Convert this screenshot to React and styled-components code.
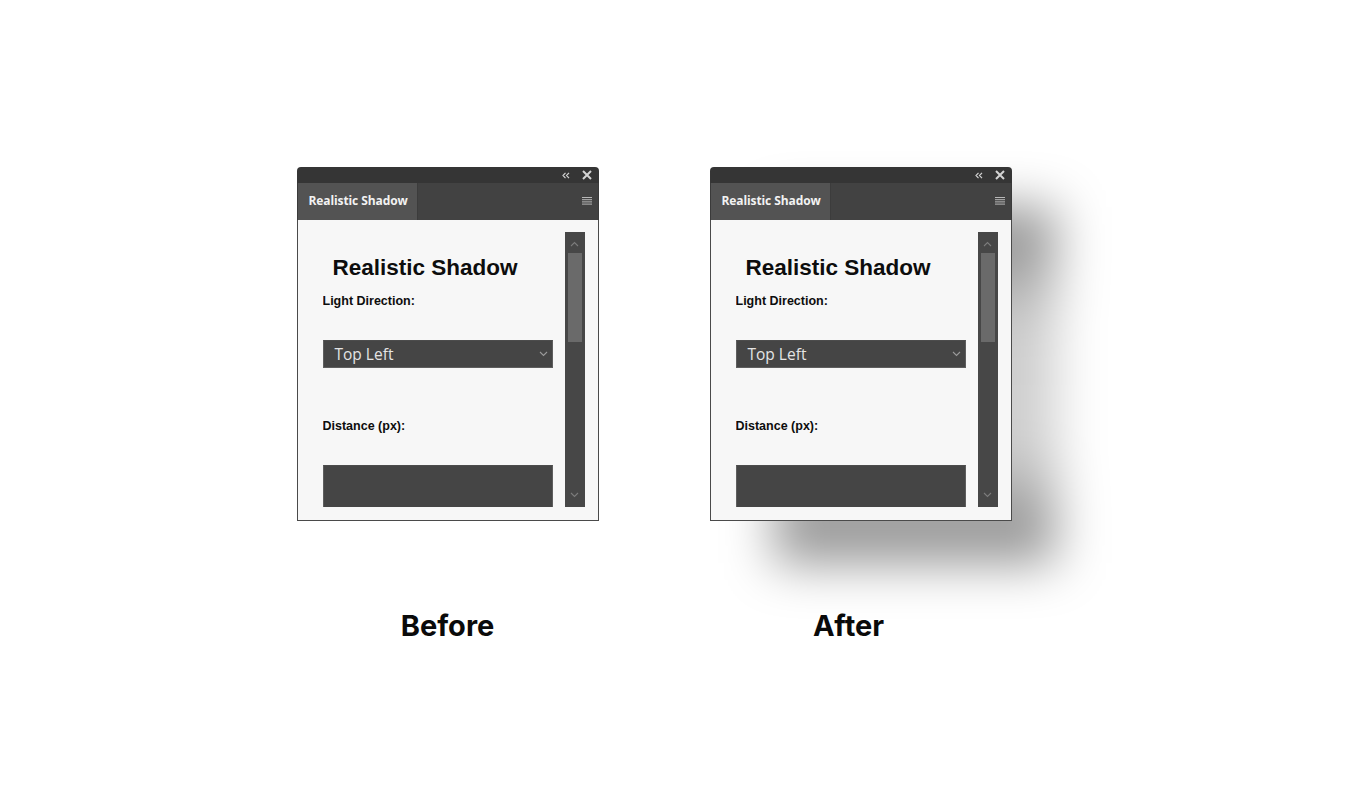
import React from "react";
import styled, { createGlobalStyle, css } from "styled-components";

const GlobalStyle = createGlobalStyle`
  html, body {
    margin: 0;
    padding: 0;
    background: #ffffff;
  }
  body {
    font-family: "Liberation Sans", Arial, sans-serif;
  }
`;

const Page = styled.div`
  display: flex;
  justify-content: center;
  gap: 111px;
  padding: 167px 52px 0 0;
  height: 800px;
  box-sizing: border-box;
`;

const Column = styled.div`
  display: flex;
  flex-direction: column;
  align-items: center;
`;

const Caption = styled.div`
  margin-top: 87px;
  padding-right: ${props => props.$shift || 0}px;
  font-family: Inter, "Liberation Sans", sans-serif;
  font-weight: 700;
  font-size: 29px;
  line-height: 35px;
  color: #0a0a0a;
`;

const Panel = styled.div`
  position: relative;
  width: 302px;
  display: flex;
  flex-direction: column;

  ${props =>
    props.$shadow &&
    css`
      &::before {
        content: "";
        position: absolute;
        left: 64px;
        top: 40px;
        width: 282px;
        height: 356px;
        background: linear-gradient(
          to bottom,
          rgba(0, 0, 0, 0.44) 0%,
          rgba(0, 0, 0, 0.38) 14%,
          rgba(0, 0, 0, 0.2) 32%,
          rgba(0, 0, 0, 0.19) 68%,
          rgba(0, 0, 0, 0.38) 86%,
          rgba(0, 0, 0, 0.44) 100%
        );
        filter: blur(25px);
        z-index: 0;
      }
    `}
`;

const TitleBar = styled.div`
  position: relative;
  z-index: 1;
  height: 16px;
  background: #353535;
  border-radius: 4px 4px 0 0;
  display: flex;
  align-items: center;
  justify-content: flex-end;
  gap: 12px;
  padding-right: 7px;
`;

const TabRow = styled.div`
  position: relative;
  z-index: 1;
  height: 37px;
  background: #424242;
  display: flex;
  align-items: stretch;
  justify-content: space-between;
  border-left: 1px solid #3a3a3a;
  border-right: 1px solid #3a3a3a;
`;

const Tab = styled.div`
  width: 120px;
  background: #535353;
  border-right: 1px solid #3c3c3c;
  display: flex;
  align-items: center;
  padding: 0 0 3px 11px;
  box-sizing: border-box;
  font-family: "Open Sans", "Noto Sans", sans-serif;
  font-weight: 700;
  font-size: 12px;
  letter-spacing: -0.1px;
  color: #f2f2f2;
`;

const MenuButton = styled.div`
  display: flex;
  align-items: center;
  padding: 0 6px 2px 0;
`;

const Body = styled.div`
  position: relative;
  z-index: 1;
  height: 301px;
  box-sizing: border-box;
  background: #f7f7f7;
  border: 1px solid #4a4a4a;
  border-top: none;
  padding: 12px 13px 13px 25px;
  display: flex;
  gap: 12px;
`;

const Content = styled.div`
  flex: 1;
  overflow: hidden;
  display: flex;
  flex-direction: column;
`;

const Heading = styled.h1`
  margin: 22px 0 0 10px;
  font-family: "Liberation Sans", Arial, sans-serif;
  font-weight: 700;
  font-size: 22.5px;
  line-height: 27px;
  color: #0d0d0d;
`;

const Label = styled.div`
  margin-top: ${props => props.$top}px;
  font-family: "Liberation Sans", Arial, sans-serif;
  font-weight: 700;
  font-size: 12.5px;
  line-height: 16px;
  color: #0d0d0d;
`;

const Field = styled.div`
  margin-top: 31px;
  width: 230px;
  height: ${props => props.$height}px;
  flex-shrink: 0;
  box-sizing: border-box;
  background: #454545;
  border: 1px solid #5e5e5e;
  border-top-color: #4c4c4c;
  display: flex;
  align-items: center;
  justify-content: space-between;
  padding: 0 4px 0 11px;
  font-family: "Open Sans", "Noto Sans", sans-serif;
  font-size: 15.5px;
  color: #e4e4e4;
`;

const Scrollbar = styled.div`
  width: 20px;
  flex-shrink: 0;
  background: #474747;
  display: flex;
  flex-direction: column;
  align-items: center;
  padding: 9px 0 9px;
  box-sizing: border-box;
`;

const Thumb = styled.div`
  margin-top: 6px;
  width: 14px;
  height: 89px;
  background: #6a6a6a;
`;

const Spacer = styled.div`
  flex: 1;
`;

const Chevron = ({ up, color = "#7c7c7c" }) => (
  <svg width="9" height="6" viewBox="0 0 9 6">
    <path
      d={up ? "M1 5 L4.5 1.5 L8 5" : "M1 1 L4.5 4.5 L8 1"}
      fill="none"
      stroke={color}
      strokeWidth="1.1"
    />
  </svg>
);

const Collapse = () => (
  <svg width="8" height="7" viewBox="0 0 8 7">
    <path d="M3.5 0.8 L1 3.5 L3.5 6.2 M7 0.8 L4.5 3.5 L7 6.2" fill="none" stroke="#d0d0d0" strokeWidth="1.2" />
  </svg>
);

const Close = () => (
  <svg width="10" height="10" viewBox="0 0 10 10">
    <path d="M1 1 L9 9 M9 1 L1 9" fill="none" stroke="#d4d4d4" strokeWidth="2" />
  </svg>
);

const Menu = () => (
  <svg width="10" height="8" viewBox="0 0 10 8">
    <path d="M0 0.5 H10 M0 2.7 H10 M0 4.9 H10 M0 7.1 H10" stroke="#b8b8b8" strokeWidth="1" />
  </svg>
);

const ShadowPanel = ({ shadow }) => (
  <Panel $shadow={shadow}>
    <TitleBar>
      <Collapse />
      <Close />
    </TitleBar>
    <TabRow>
      <Tab>Realistic Shadow</Tab>
      <MenuButton>
        <Menu />
      </MenuButton>
    </TabRow>
    <Body>
      <Content>
        <Heading>Realistic Shadow</Heading>
        <Label $top={12}>Light Direction:</Label>
        <Field $height={28}>
          <span>Top Left</span>
          <Chevron color="#9a9a9a" />
        </Field>
        <Label $top={50}>Distance (px):</Label>
        <Field $height={48} />
      </Content>
      <Scrollbar>
        <Chevron up />
        <Thumb />
        <Spacer />
        <Chevron />
      </Scrollbar>
    </Body>
  </Panel>
);

export default function App() {
  return (
    <>
      <GlobalStyle />
      <Page>
        <Column>
          <ShadowPanel />
          <Caption>Before</Caption>
        </Column>
        <Column>
          <ShadowPanel shadow />
          <Caption $shift={24}>After</Caption>
        </Column>
      </Page>
    </>
  );
}
